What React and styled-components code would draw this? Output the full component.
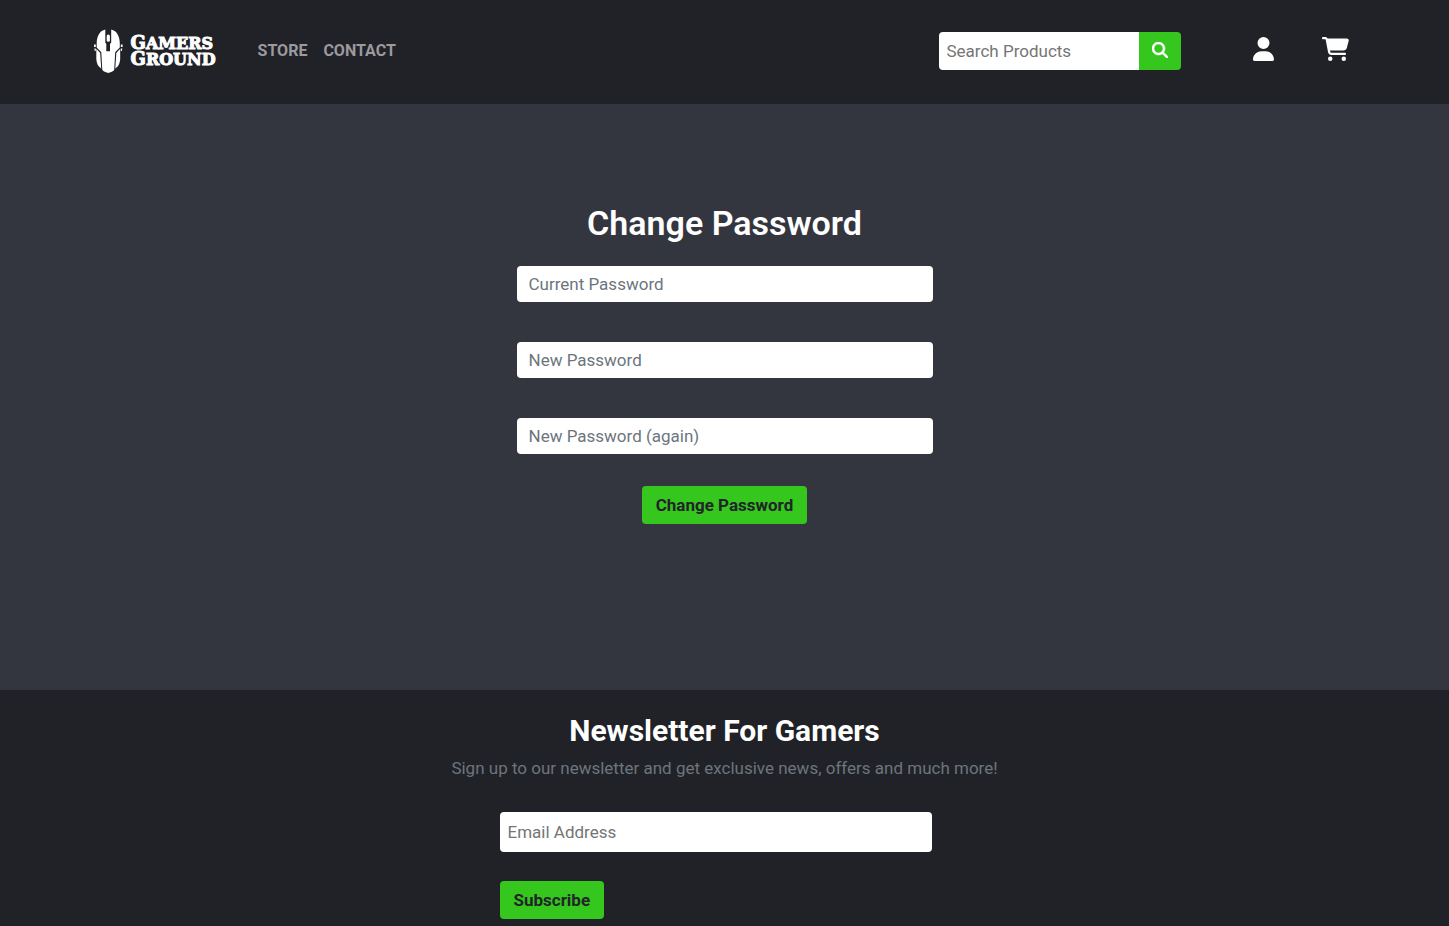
import React from "react";
import styled, { createGlobalStyle } from "styled-components";
import { FaMagnifyingGlass, FaUser, FaCartShopping } from "react-icons/fa6";

const GlobalStyle = createGlobalStyle`
  *, *::before, *::after { box-sizing: border-box; }
  body {
    margin: 0;
    background: #34363f;
    color: #fff;
    font-family: Roboto, "Liberation Sans", sans-serif;
    font-size: 17px;
    line-height: 24px;
  }
  h1, h2, p { margin: 0; }
  input, button { font: inherit; }
`;

const Page = styled.div`
  display: flex;
  flex-direction: column;
  min-height: 100vh;
`;

const Header = styled.header`
  background: #212227;
  padding: 27px 24px 29px;
`;

const HeaderInner = styled.div`
  display: flex;
  align-items: center;
  max-width: 1262px;
  height: 48px;
  margin: 0 auto;
  padding-right: 7px;
`;

const Logo = styled.a`
  display: flex;
  align-items: center;
  gap: 8px;
  margin-right: 42px;
  color: #fff;
  text-decoration: none;
`;

const LogoText = styled.span`
  font-family: "DejaVu Serif", serif;
  font-size: 16px;
  font-weight: 700;
  line-height: 15px;
  -webkit-text-stroke: 1px #fff;
  span { display: block; }
  span::first-letter { font-size: 18px; }
`;

const Nav = styled.nav`
  display: flex;
  flex: 1;
  gap: 16px;
`;

const NavLink = styled.a`
  color: #9c999f;
  font-size: 16px;
  font-weight: 700;
  text-decoration: none;
`;

const SearchForm = styled.form`
  display: flex;
  height: 38px;
  margin-right: 72px;
`;

const TextInput = styled.input`
  width: 100%;
  height: ${(p) => p.$height}px;
  padding: 0 ${(p) => p.$pad}px;
  border: 0;
  border-radius: 4px;
  background: #fff;
  color: #495057;
  &::placeholder { color: ${(p) => p.$hint || "#757575"}; opacity: 1; }
`;

const SearchInput = styled(TextInput)`
  width: 200px;
  border-radius: 4px 0 0 4px;
`;

const Button = styled.button`
  height: 38px;
  padding: 0 14px;
  border: 0;
  border-radius: 4px;
  background: #35c71e;
  color: #212529;
  font-weight: 700;
  cursor: pointer;
`;

const SearchButton = styled(Button)`
  display: flex;
  align-items: center;
  justify-content: center;
  width: 42px;
  padding: 0 0 2px;
  border-radius: 0 4px 4px 0;
  color: #fff;
  svg { width: 16px; height: 16px; stroke: currentColor; stroke-width: 16px; }
`;

const IconLinks = styled.div`
  display: flex;
  gap: 48px;
  padding-bottom: 4px;
`;

const IconLink = styled.a`
  display: flex;
  color: #fff;
  svg { width: ${(p) => p.$width}px; height: 24px; }
`;

const Main = styled.main`
  display: flex;
  flex: 1;
  flex-direction: column;
  align-items: center;
  padding: 100px 16px 166px;
`;

const PageTitle = styled.h1`
  font-size: 34px;
  font-weight: 600;
  line-height: 38px;
  margin-bottom: 24px;
`;

const PasswordForm = styled.form`
  display: flex;
  flex-direction: column;
  align-items: center;
  gap: 40px;
  width: 100%;
  max-width: 416px;
`;

const Submit = styled.div`
  margin-top: -8px;
`;

const Footer = styled.footer`
  display: flex;
  flex-direction: column;
  align-items: center;
  padding: 24px 16px 7px;
  background: #212227;
`;

const FooterTitle = styled.h2`
  font-size: 30px;
  font-weight: 700;
  line-height: 34px;
  margin-bottom: 8px;
`;

const FooterText = styled.p`
  color: #6c757d;
`;

const NewsletterForm = styled.form`
  display: flex;
  flex-direction: column;
  align-items: flex-start;
  gap: 29px;
  width: 100%;
  max-width: 450px;
  margin-top: 32px;
  padding-right: 18px;
`;

const passwordFields = [
  "Current Password",
  "New Password",
  "New Password (again)",
];

function MouseLogo() {
  return (
    <svg width="29" height="45" viewBox="0 0 29 45" fill="#fff" aria-hidden="true">
      <path d="M11.300 .5V13.500L12.300 15V22.300H16V15L17.200 13.500V.5C22.500 1.800 25.600 6.500 25.800 14V18.500L21.200 23.300L20.200 41C18.300 42.900 16.300 43.500 14.300 44C12.300 43.500 10.200 42.900 8.300 41L7.300 23.300L2.700 18.500V14C2.900 6.500 6 1.800 11.300 .5Z" />
      <rect x="12.700" y="5.500" width="3.200" height="7.200" rx="1.500" />
      <path d="M2.300 19.800L6.200 24L7.200 39.500C4 37.500 2.600 34.500 2.300 30Z" />
      <path d="M26.200 19.800L22.300 24L21.300 39.500C24.500 37.500 25.900 34.500 26.200 30Z" />
      <path d="M0 15.500h1.800v2.500H0zM.3 19.500h1.500v2.500H.8zM26.800 15.500h1.800v2.500h-1.800zM26.800 19.500h1.500l-.5 2.500h-1z" />
    </svg>
  );
}

export default function App() {
  return (
    <Page>
      <GlobalStyle />
      <Header>
        <HeaderInner>
          <Logo href="#" aria-label="Gamers Ground">
            <MouseLogo />
            <LogoText>
              <span>GAMERS</span>
              <span>GROUND</span>
            </LogoText>
          </Logo>
          <Nav>
            <NavLink href="#store">STORE</NavLink>
            <NavLink href="#contact">CONTACT</NavLink>
          </Nav>
          <SearchForm role="search">
            <SearchInput
              type="search"
              aria-label="Search Products"
              placeholder="Search Products"
              $height={38}
              $pad={8}
            />
            <SearchButton type="button" aria-label="Search">
              <FaMagnifyingGlass />
            </SearchButton>
          </SearchForm>
          <IconLinks>
            <IconLink href="#account" aria-label="Account" $width={21}>
              <FaUser />
            </IconLink>
            <IconLink href="#cart" aria-label="Cart" $width={27}>
              <FaCartShopping />
            </IconLink>
          </IconLinks>
        </HeaderInner>
      </Header>
      <Main>
        <PageTitle>Change Password</PageTitle>
        <PasswordForm>
          {passwordFields.map((label) => (
            <TextInput
              key={label}
              type="password"
              aria-label={label}
              placeholder={label}
              $height={36}
              $pad={12}
              $hint="#6c757d"
            />
          ))}
          <Submit>
            <Button type="button">Change Password</Button>
          </Submit>
        </PasswordForm>
      </Main>
      <Footer>
        <FooterTitle>Newsletter For Gamers</FooterTitle>
        <FooterText>
          Sign up to our newsletter and get exclusive news, offers and much more!
        </FooterText>
        <NewsletterForm>
          <TextInput
            type="email"
            aria-label="Email Address"
            placeholder="Email Address"
            $height={40}
            $pad={8}
          />
          <Button type="button">Subscribe</Button>
        </NewsletterForm>
      </Footer>
    </Page>
  );
}
